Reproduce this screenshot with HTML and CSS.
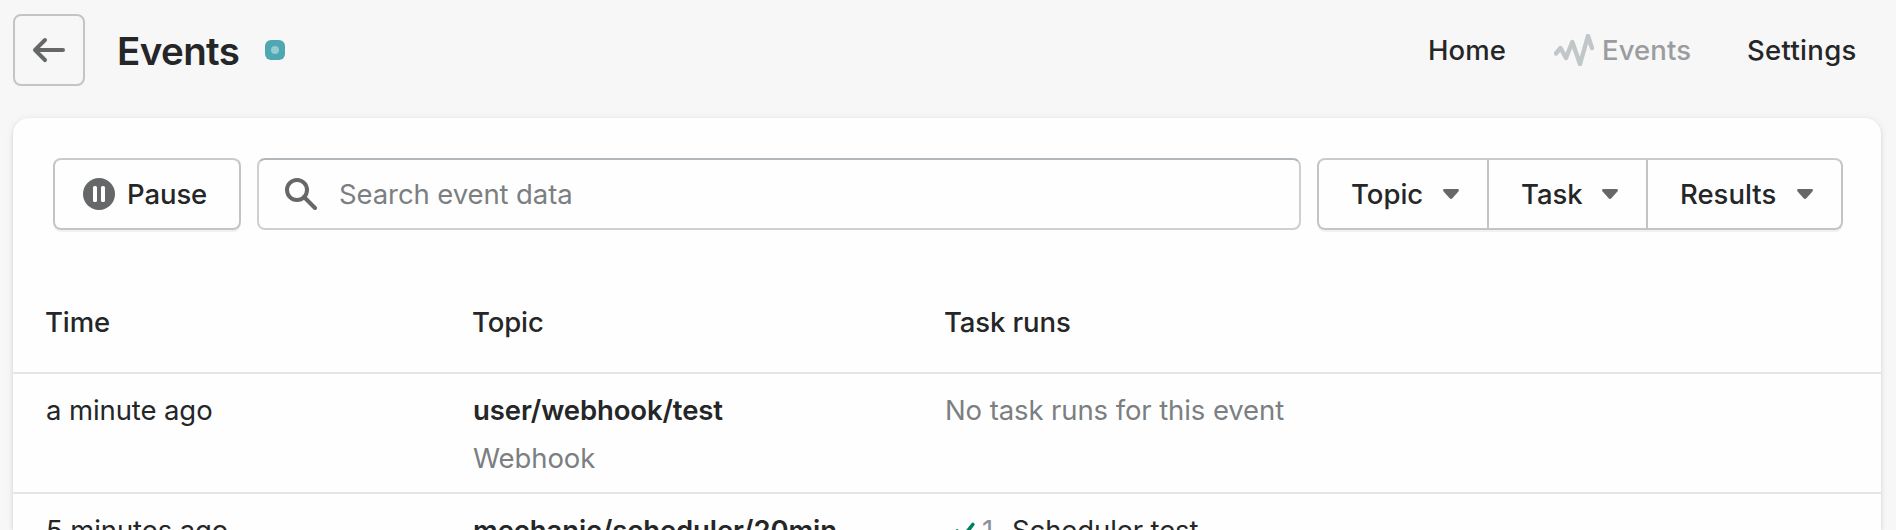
FILE: index.html
```html
<!DOCTYPE html>
<html lang="en">
<head>
<meta charset="utf-8">
<title>Events</title>
<link rel="stylesheet" href="styles.css">
</head>
<body>
<header class="header">
  <button class="back" aria-label="Back">
    <svg width="40" height="40" viewBox="0 0 20 20"><path fill="#666768" d="M17 9H5.414l3.293-3.293a.999.999 0 1 0-1.414-1.414l-5 5a.999.999 0 0 0 0 1.414l5 5a.997.997 0 0 0 1.414 0 .999.999 0 0 0 0-1.414L5.414 11H17a1 1 0 1 0 0-2z"/></svg>
  </button>
  <h1 class="title">Events</h1>
  <span class="status"><span class="status-dot"></span></span>
  <nav class="nav">
    <a class="nav-home">Home</a>
    <a class="nav-events">
      <svg class="pulse" width="40" height="32" viewBox="0 0 40 32"><path d="M2 19.5 6.500 14 12 24 18.300 8 26 30 34 2 38 14" fill="none" stroke="#c1c6c9" stroke-width="4.400" stroke-linecap="round" stroke-linejoin="round"/></svg>
      <span>Events</span>
    </a>
    <a class="nav-settings">Settings</a>
  </nav>
</header>
<main class="card">
  <div class="toolbar">
    <button class="button pause">
      <svg width="32" height="32" viewBox="0 0 32 32"><circle cx="16" cy="16" r="16" fill="#666768"/><rect x="10" y="8" width="4" height="16" rx="1.500" fill="#fff"/><rect x="18" y="8" width="4" height="16" rx="1.500" fill="#fff"/></svg>
      <span>Pause</span>
    </button>
    <div class="search">
      <svg width="32" height="32" viewBox="0 0 32 32" fill="none" stroke="#666768" stroke-width="4"><circle cx="12" cy="12" r="10"/><path d="M19 19 30 30" stroke-linecap="round"/></svg>
      <span>Search event data</span>
    </div>
    <div class="filters">
      <button class="filter topic"><span>Topic</span><svg width="16" height="10" viewBox="0 0 16 10"><path d="M1.500 0h13q2.300.3.900 2.400L9.600 9Q8 10.800 6.400 9L.6 2.400Q-.8.3 1.500 0z" fill="#666768"/></svg></button>
      <button class="filter task"><span>Task</span><svg width="16" height="10" viewBox="0 0 16 10"><path d="M1.500 0h13q2.300.3.900 2.400L9.600 9Q8 10.800 6.400 9L.6 2.400Q-.8.3 1.500 0z" fill="#666768"/></svg></button>
      <button class="filter results"><span>Results</span><svg width="16" height="10" viewBox="0 0 16 10"><path d="M1.500 0h13q2.300.3.900 2.400L9.600 9Q8 10.800 6.400 9L.6 2.400Q-.8.3 1.500 0z" fill="#666768"/></svg></button>
    </div>
  </div>
  <div class="row head">
    <div>Time</div>
    <div>Topic</div>
    <div>Task runs</div>
  </div>
  <div class="row">
    <div>a minute ago</div>
    <div>
      <div class="strong">user/webhook/test</div>
      <div class="muted">Webhook</div>
    </div>
    <div class="muted">No task runs for this event</div>
  </div>
  <div class="row last">
    <div>5 minutes ago</div>
    <div class="strong">mechanic/scheduler/20min</div>
    <div class="run">
      <svg width="24" height="20" viewBox="0 0 24 20"><path d="M3 9 8.500 15.500 18.800 2.500" fill="none" stroke="#008060" stroke-width="3.600" stroke-linecap="round" stroke-linejoin="round"/></svg>
      <span class="count">1</span>
      <span>Scheduler test</span>
    </div>
  </div>
</main>
</body>
</html>
```
FILE: styles.css
```css
* { box-sizing: border-box; }
html, body { height: 100%; }
body {
  margin: 0;
  overflow: hidden;
  background: #f7f7f7;
  color: #242627;
  font: 400 27.5px/40px Inter, "Liberation Sans", sans-serif;
  letter-spacing: -0.1px;
}
svg { display: block; flex: none; }
button { font: inherit; letter-spacing: inherit; color: inherit; margin: 0; padding: 0; background: none; }
.header {
  display: flex;
  align-items: center;
  height: 118px;
  padding: 0 40px 18px 13px;
}
.back {
  display: flex;
  align-items: center;
  justify-content: center;
  width: 72px;
  height: 72px;
  border: 2px solid #c1c5c8;
  border-radius: 8px;
}
.title {
  margin: 2px 0 0 32px;
  width: 148px;
  font-size: 38.5px;
  line-height: 56px;
  font-weight: 600;
  letter-spacing: -0.6px;
  white-space: nowrap;
}
.status {
  display: flex;
  align-items: center;
  justify-content: center;
  width: 20px;
  height: 20px;
  border-radius: 6px;
  background: #4ea7b1;
}
.status-dot { width: 8px; height: 8px; border-radius: 50%; background: #96cbd0; }
.nav { display: flex; align-items: center; margin-left: auto; font-weight: 500; letter-spacing: 0.1px; white-space: nowrap; }
.nav-home { width: 126px; }
.nav-events { display: flex; align-items: center; gap: 8px; width: 193px; color: #9a9da0; }
.nav-settings { width: 109px; letter-spacing: 0.3px; }
.card {
  width: 1868px;
  height: 412px;
  margin-left: 13px;
  padding-top: 40px;
  overflow: hidden;
  background: #fefefe;
  border-radius: 16px 16px 0 0;
  box-shadow: 0 0 10px rgba(23, 24, 24, .05), 0 2px 4px rgba(0, 0, 0, .13);
}
.toolbar { display: flex; gap: 16px; height: 72px; padding: 0 38px 0 40px; font-weight: 500; }
.button, .filters {
  border: 2px solid #c1c5c8;
  border-top-color: #c9cccf;
  border-radius: 8px;
  box-shadow: 0 2px 0 rgba(0, 0, 0, .05);
}
.pause { display: flex; align-items: center; gap: 12px; width: 188px; padding-left: 28px; }
.search {
  display: flex;
  align-items: center;
  gap: 22px;
  flex: 1;
  padding-left: 26px;
  border: 2px solid #cdcfd1;
  border-top-color: #b2b7bb;
  border-radius: 8px;
  color: #7b7f82;
  font-weight: 400;
}
.filters { display: flex; width: 526px; letter-spacing: 0; }
.filter { display: flex; align-items: center; justify-content: space-between; border: 0; padding: 0 28px 0 32px; }
.filter + .filter { border-left: 2px solid #c1c5c8; }
.topic { width: 168px; }
.task { width: 159px; }
.results { flex: 1; }
.row {
  display: grid;
  grid-template-columns: 427px 472px 1fr;
  height: 120px;
  padding: 16px 32px 0 33px;
  border-top: 2px solid #e4e5e5;
  white-space: nowrap;
}
.head { height: 142px; padding: 72px 32px 0; border-top: 0; font-weight: 500; }
.last { height: 38px; }
.strong { height: 48px; font-weight: 600; }
.muted { color: #7b7f82; }
.run { display: flex; align-items: flex-start; padding-left: 9px; }
.run svg { margin-top: 12px; }
.count { width: 34px; padding-left: 4px; color: #8c9196; }
```
